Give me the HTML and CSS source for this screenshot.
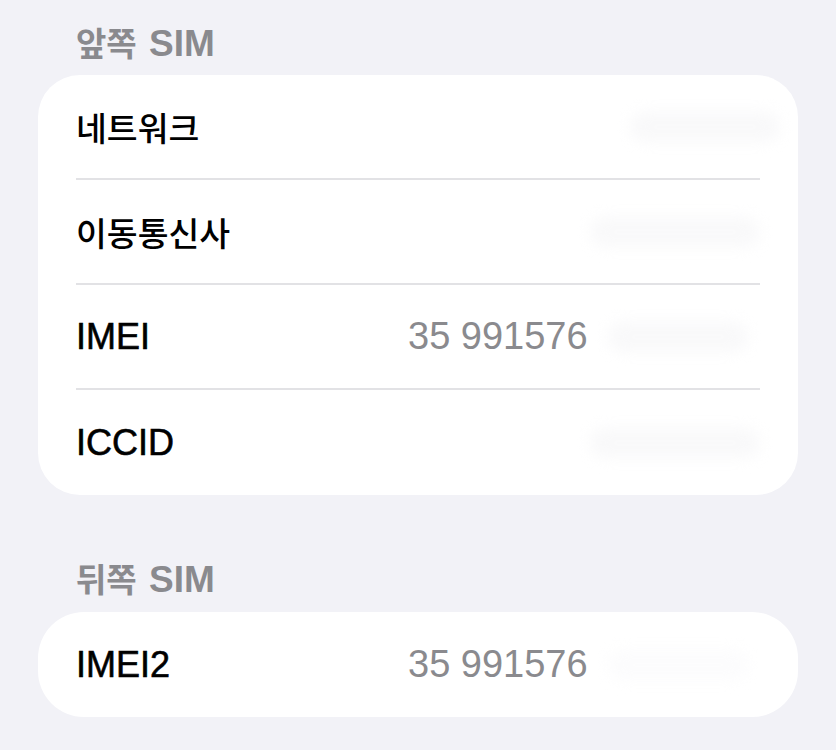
FILE: index.html
```html
<!DOCTYPE html>
<html lang="ko">

<head>
    <meta charset="UTF-8">
    <meta name="viewport" content="width=device-width, initial-scale=1.0">
    <title>SIM</title>
    <link rel="stylesheet" href="styles.css">
</head>

<body>
    <div id="page">
        <!-- front sim -->
        <h3 class="section-title"><span class="ko">앞쪽</span> SIM</h3>
        <div class="card">
            <div class="row">
                <p class="label ko">네트워크</p>
                <p class="value"><span class="redact wide"></span></p>
            </div>
            <div class="row">
                <p class="label ko">이동통신사</p>
                <p class="value"><span class="redact"></span></p>
            </div>
            <div class="row">
                <p class="label">IMEI</p>
                <p class="value">35 991576<span class="redact short"></span></p>
            </div>
            <div class="row">
                <p class="label">ICCID</p>
                <p class="value"><span class="redact"></span></p>
            </div>
        </div>

        <!-- back sim -->
        <h3 class="section-title second"><span class="ko">뒤쪽</span> SIM</h3>
        <div class="card round">
            <div class="row">
                <p class="label">IMEI2</p>
                <p class="value">35 991576<span class="redact short bright"></span></p>
            </div>
        </div>
    </div>
</body>

</html>
```

FILE: styles.css
```css
* {
    margin: 0;
    padding: 0;
    box-sizing: border-box;
}

body,
html {
    height: 100%;
    width: 100%;
    background-color: #f2f2f7;
    font-family: "Liberation Sans", "Noto Sans CJK KR", sans-serif;
}

#page {
    padding: 17px 38px 0 38px;
}

.ko {
    font-family: "Noto Sans CJK KR", sans-serif;
}

.section-title {
    height: 50px;
    padding-left: 38px;
    font-size: 37px;
    line-height: 50px;
    font-weight: bold;
    color: #8a8a8e;
    margin-bottom: 8px;
    overflow: hidden;
}

.section-title .ko {
    font-size: 33px;
    margin-right: 2px;
}

.section-title.second {
    margin-top: 58px;
    margin-bottom: 9px;
}

.card {
    background-color: #fff;
    border-radius: 42px;
    overflow: hidden;
}

.card.round {
    border-radius: 46px;
}

.row {
    height: 105px;
    margin: 0 38px;
    display: grid;
    grid-template-columns: 332px 1fr;
    align-items: center;
    border-bottom: 2px solid #e2e2e5;
}

.row:last-child {
    border-bottom: none;
}

.label {
    font-size: 36px;
    color: #000;
    -webkit-text-stroke: 0.6px #000;
}

.label.ko {
    font-size: 33.5px;
    font-weight: 500;
    -webkit-text-stroke: 0;
}

.value {
    font-size: 38px;
    color: #8a8a8e;
    display: flex;
    align-items: center;
}

.redact {
    display: block;
    height: 30px;
    width: 170px;
    margin-left: auto;
    border-radius: 20px;
    background-color: #f9f9fa;
    filter: blur(7px);
}

.redact.wide {
    width: 150px;
    margin-right: -20px;
}

.redact.short {
    margin-left: 20px;
    width: 140px;
}

.redact.bright {
    background-color: #fcfcfd;
}
```
